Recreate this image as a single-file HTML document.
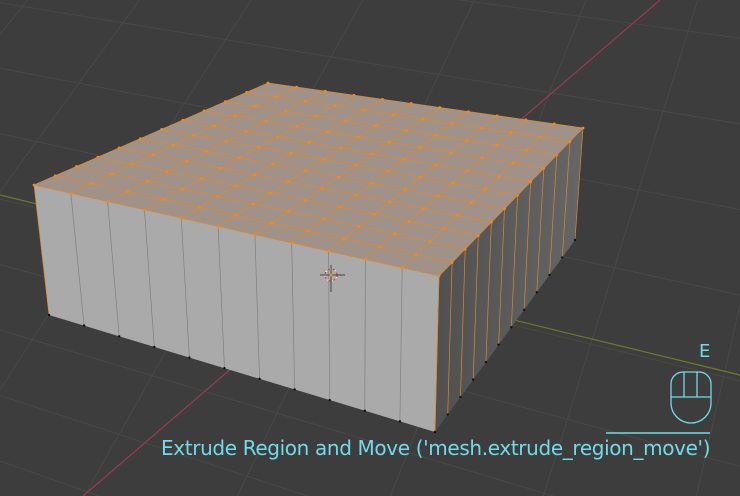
<!DOCTYPE html>
<html><head><meta charset="utf-8"><style>
html,body{margin:0;padding:0;background:#3d3d3d;width:740px;height:496px;overflow:hidden;position:relative}
svg{position:absolute;left:0;top:0;display:block}
.t{position:absolute;left:161px;top:436px;font:20px "DejaVu Sans","Liberation Sans",sans-serif;line-height:24px;color:#72dbe8;white-space:nowrap;letter-spacing:-0.36px}
.e{position:absolute;left:699px;top:342px;font:18px "DejaVu Sans","Liberation Sans",sans-serif;line-height:20px;color:#72dbe8}
</style></head><body>
<svg id="s" width="740" height="496" viewBox="0 0 740 496"></svg>
<div class="e">E</div>
<div class="t">Extrude Region and Move ('mesh.extrude_region_move')</div>
<script>
var s=document.getElementById('s'),h='';
function L(a,b,c,w,o){h+='<line x1="'+a[0]+'" y1="'+a[1]+'" x2="'+b[0]+'" y2="'+b[1]+'" stroke="'+c+'" stroke-width="'+(w||1)+'"'+(o?' opacity="'+o+'"':'')+'/>';}
function P(p,f){h+='<polygon points="'+p.map(function(q){return q.join(',')}).join(' ')+'" fill="'+f+'"/>';}
function lp(a,b,t){return [a[0]+(b[0]-a[0])*t,a[1]+(b[1]-a[1])*t];}
for(var i=-8;i<10;i++){L([-200+i*170,700],[380+i*95,-200],'#484848',1);}
for(var i=-8;i<10;i++){L([-200,90+i*60],[900,330+i*90],'#484848',1);}
L([83,496],[660,0],'#9b3b4e',1.2);
L([0,195],[740,375],'#6d7a2a',1.2);
var A=[34,185],B=[268,83],C=[583,128],D=[439,276],A2=[49,315],D2=[435,432],C2=[575,240];
P([A,D,D2,A2],'#aaaaaa');
h+='<defs><linearGradient id="g" x1="0" x2="1"><stop offset="0" stop-color="#505050"/><stop offset="1" stop-color="#666"/></linearGradient></defs>';
P([D,C,C2,D2],'url(#g)');
P([A,B,C,D],'#a09189');
var N=11;
for(var i=0;i<=N;i++){var t=i/N;
 L(lp(A,D,t),lp(A2,D2,t),i==0||i==N?'#e08a2a':'#808080',0.7);
 L(lp(D,C,t),lp(D2,C2,t),'#d98a30',0.7);
 L(lp(A,D,t),lp(B,C,t),'#dc8a34',0.8);
 L(lp(A,B,t),lp(D,C,t),'#dc8a34',0.8);
}
for(var i=0;i<=N;i++)for(var j=0;j<=N;j++){var p=lp(lp(A,D,i/N),lp(B,C,i/N),j/N);h+='<circle cx="'+p[0]+'" cy="'+p[1]+'" r="1.4" fill="#f08a1a"/>';}
for(var i=0;i<=N;i++){var p=lp(A2,D2,i/N),q=lp(D2,C2,i/N);h+='<circle cx="'+p[0]+'" cy="'+p[1]+'" r="1.2" fill="#111"/><circle cx="'+q[0]+'" cy="'+q[1]+'" r="1.2" fill="#111"/>';}
h+='<circle cx="331" cy="275" r="6" fill="none" stroke="#fff" stroke-width="1.2" stroke-dasharray="3 2"/><circle cx="331" cy="275" r="6" fill="none" stroke="#c03040" stroke-width="1.2" stroke-dasharray="2 3"/>';
L([331,265],[331,292],'#444',1);L([320,275],[345,275],'#444',1);
h+='<circle cx="331" cy="275" r="1.5" fill="#f08a1a"/>';
h+='<path d="M671 397 V384 a12 12 0 0 1 12 -12 h16 a12 12 0 0 1 12 12 V403 a20 20 0 0 1 -40 0 Z M671 397 H711 M684 372 V397 M697 372 V397" fill="none" stroke="#72dbe8" stroke-width="1.3"/>';
L([606,433],[710,433],'#72dbe8',1.5);
s.innerHTML=h;
</script>
</body></html>
